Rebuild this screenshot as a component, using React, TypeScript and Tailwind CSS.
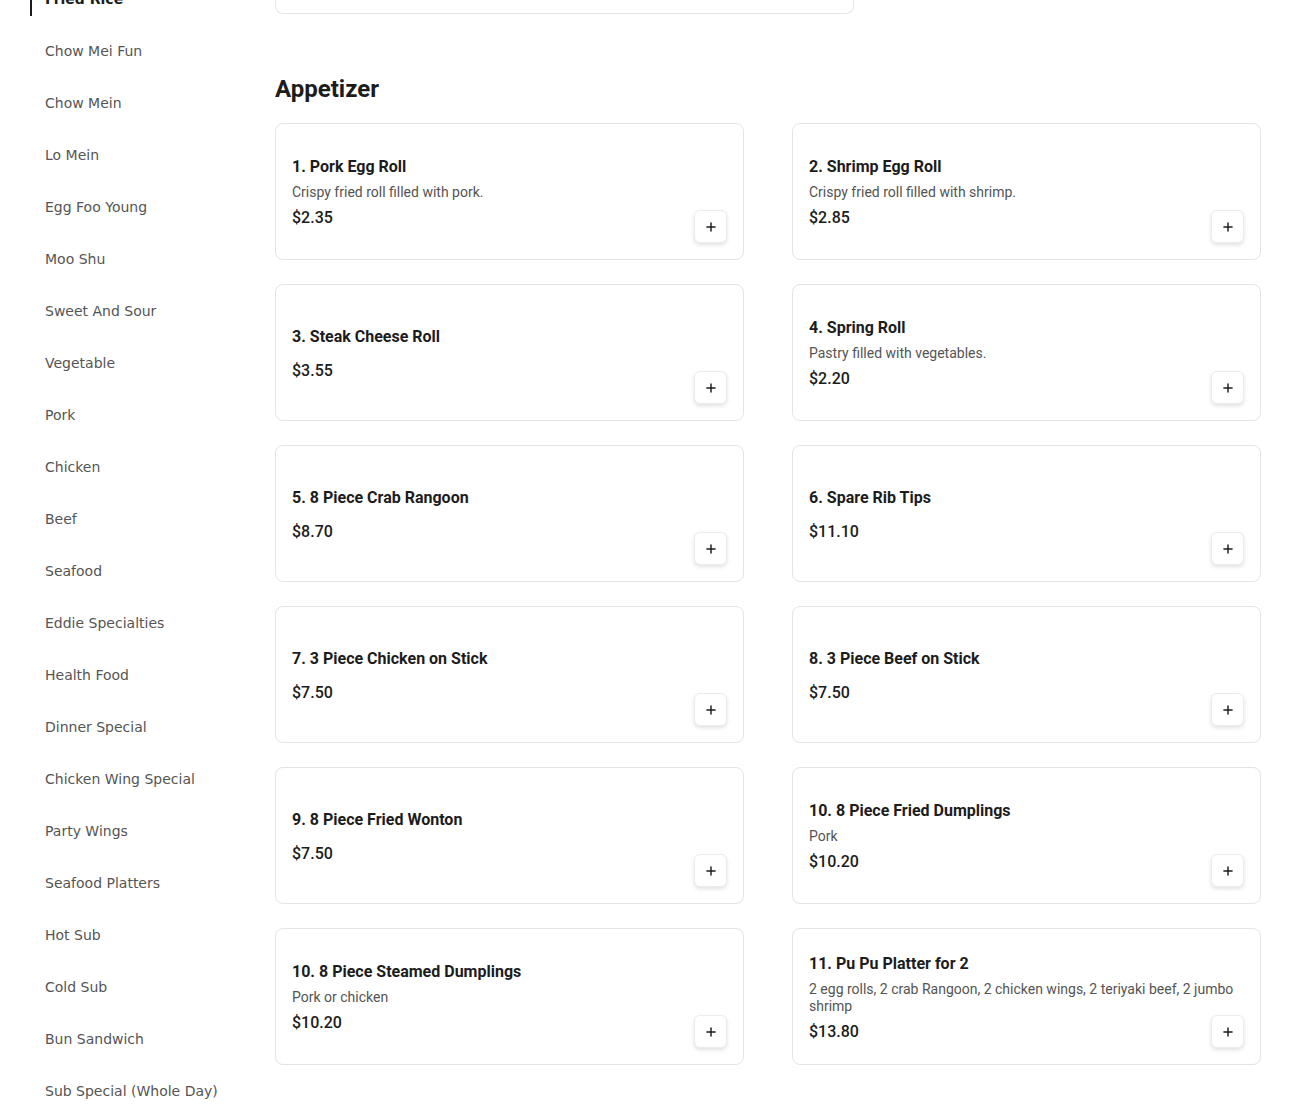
import { Plus } from 'lucide-react';

const CATEGORIES = [
  'Fried Rice',
  'Chow Mei Fun',
  'Chow Mein',
  'Lo Mein',
  'Egg Foo Young',
  'Moo Shu',
  'Sweet And Sour',
  'Vegetable',
  'Pork',
  'Chicken',
  'Beef',
  'Seafood',
  'Eddie Specialties',
  'Health Food',
  'Dinner Special',
  'Chicken Wing Special',
  'Party Wings',
  'Seafood Platters',
  'Hot Sub',
  'Cold Sub',
  'Bun Sandwich',
  'Sub Special (Whole Day)',
];

type Item = { name: string; desc?: string; price: string };

const ITEMS: Item[] = [
  { name: '1. Pork Egg Roll', desc: 'Crispy fried roll filled with pork.', price: '$2.35' },
  { name: '2. Shrimp Egg Roll', desc: 'Crispy fried roll filled with shrimp.', price: '$2.85' },
  { name: '3. Steak Cheese Roll', price: '$3.55' },
  { name: '4. Spring Roll', desc: 'Pastry filled with vegetables.', price: '$2.20' },
  { name: '5. 8 Piece Crab Rangoon', price: '$8.70' },
  { name: '6. Spare Rib Tips', price: '$11.10' },
  { name: '7. 3 Piece Chicken on Stick', price: '$7.50' },
  { name: '8. 3 Piece Beef on Stick', price: '$7.50' },
  { name: '9. 8 Piece Fried Wonton', price: '$7.50' },
  { name: '10. 8 Piece Fried Dumplings', desc: 'Pork', price: '$10.20' },
  { name: '10. 8 Piece Steamed Dumplings', desc: 'Pork or chicken', price: '$10.20' },
  {
    name: '11. Pu Pu Platter for 2',
    desc: '2 egg rolls, 2 crab Rangoon, 2 chicken wings, 2 teriyaki beef, 2 jumbo shrimp',
    price: '$13.80',
  },
];

function MenuCard({ item }: { item: Item }) {
  return (
    <div className="relative flex h-[137px] flex-col justify-center rounded-lg border border-[#e4e4e4] bg-white pl-4 pr-[24px] pt-[2px]">
      <p className="text-base font-bold leading-6 text-[#1c1c1c]">{item.name}</p>
      {item.desc && (
        <p className="mt-[5px] text-sm leading-[17px] text-[#545454]">{item.desc}</p>
      )}
      <p className={`${item.desc ? 'mt-[5px]' : 'mt-[10px]'} text-base font-medium leading-6 text-[#1c1c1c]`}>
        {item.price}
      </p>
      <button className="absolute bottom-4 right-4 flex h-[33px] w-[33px] items-center justify-center rounded-md border border-[#ececec] bg-white shadow-[0_2px_4px_rgba(0,0,0,0.12)]">
        <Plus size={14} strokeWidth={2.5} className="text-[#1c1c1c]" />
      </button>
    </div>
  );
}

export default function App() {
  return (
    <div className="flex h-[1107px] overflow-hidden bg-white">
      <aside className="w-[275px] shrink-0 pl-[30px] font-['DejaVu_Sans',sans-serif] text-sm">
        <ul className="-mt-[18px]">
          {CATEGORIES.map((name, i) => (
            <li key={name} className="mb-[18px]">
              <span
                className={`block h-[34px] border-l-2 pl-[13px] leading-[34px] ${
                  i === 0 ? 'border-[#1c1c1c] font-bold text-[#1c1c1c]' : 'border-transparent text-[#555]'
                }`}
              >
                {name}
              </span>
            </li>
          ))}
        </ul>
      </aside>

      <main className="flex-1 pr-[29px] font-['Roboto',sans-serif]">
        <div className="h-[14px] w-[579px] rounded-b-lg border-x border-b border-[#e4e4e4]" />
        <h2 className="mt-[59px] text-2xl font-bold leading-8 text-[#1c1c1c]">Appetizer</h2>
        <div className="mt-[18px] grid grid-cols-2 gap-x-[48px] gap-y-[24px]">
          {ITEMS.map((item) => (
            <MenuCard key={item.name + item.price} item={item} />
          ))}
        </div>
      </main>
    </div>
  );
}
